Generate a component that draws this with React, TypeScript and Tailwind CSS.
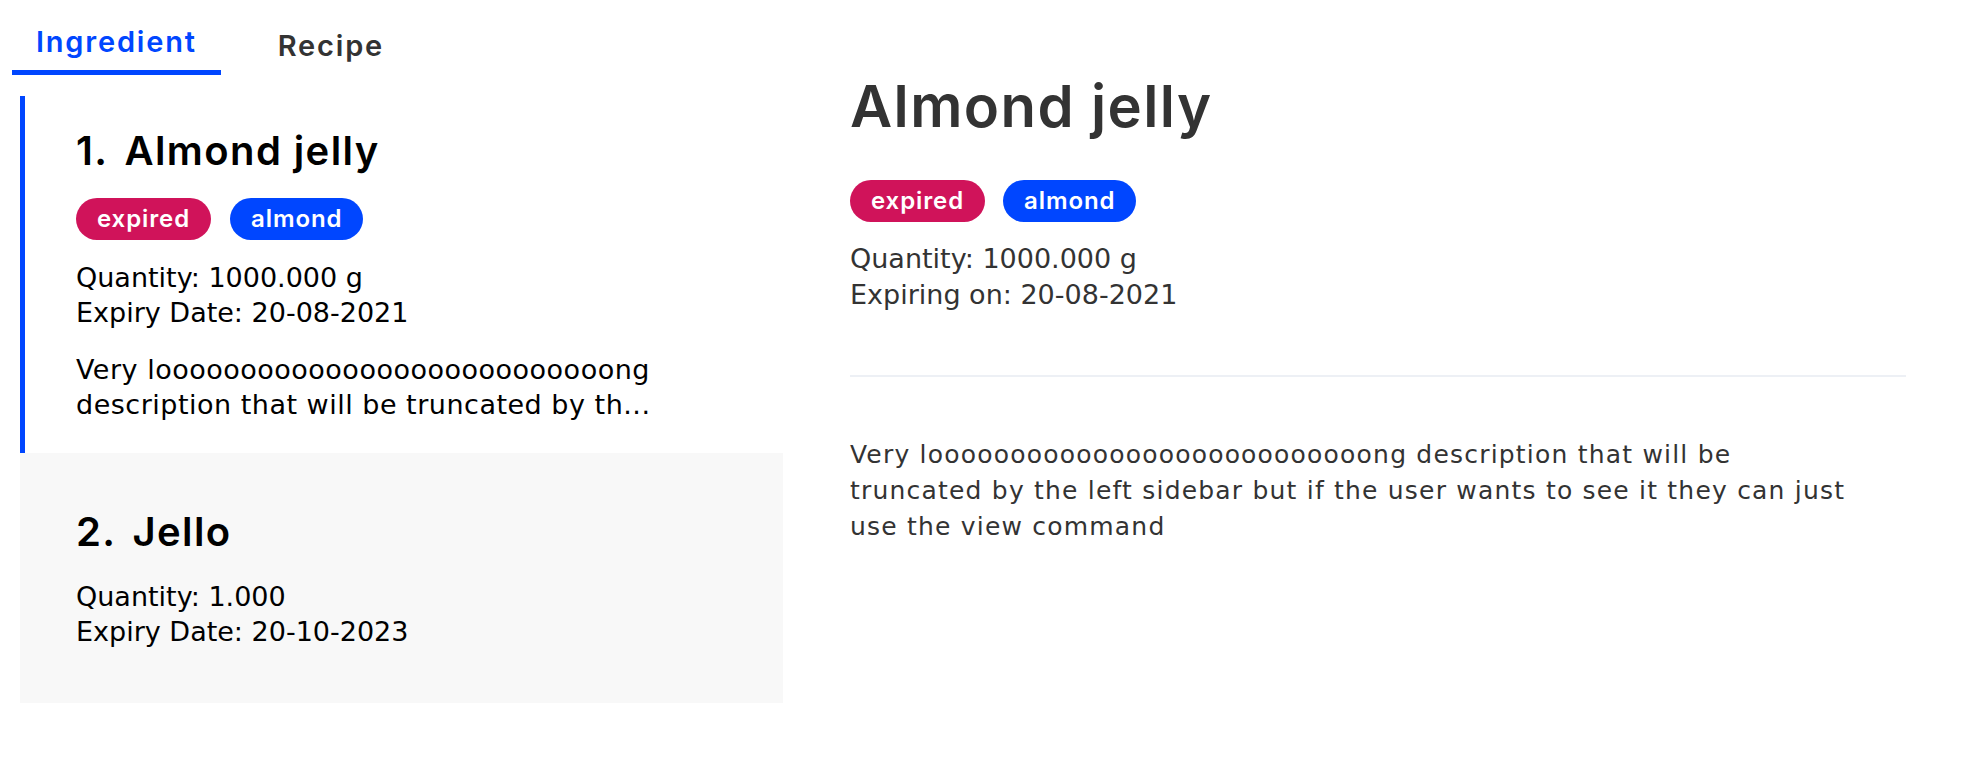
import React, { useState } from "react"

type Ingredient = {
  name: string
  quantity: string
  expiry: string
  tags: { label: string; tone: "red" | "blue" }[]
  description?: string
}

const longWord = "l" + "o".repeat(27) + "ng"

const ingredients: Ingredient[] = [
  {
    name: "Almond jelly",
    quantity: "1000.000 g",
    expiry: "20-08-2021",
    tags: [
      { label: "expired", tone: "red" },
      { label: "almond", tone: "blue" },
    ],
    description: `Very ${longWord} description that will be truncated by the left sidebar but if the user wants to see it they can just use the view command`,
  },
  {
    name: "Jello",
    quantity: "1.000",
    expiry: "20-10-2023",
    tags: [],
  },
]

function Tag({ label, tone }: { label: string; tone: "red" | "blue" }) {
  return (
    <span
      className={
        "inline-flex h-[42px] items-center rounded-full px-[21px] font-['Inter',sans-serif] text-[24px] font-semibold leading-none tracking-[0.9px] text-white " +
        (tone === "red" ? "bg-[#d0135a]" : "bg-[#0046ff]")
      }
    >
      {label}
    </span>
  )
}

function Tabs({ active, onChange }: { active: string; onChange: (t: string) => void }) {
  return (
    <div className="flex items-start gap-[33px]">
      {["Ingredient", "Recipe"].map((t) => {
        const on = t === active
        return (
          <button
            key={t}
            onClick={() => onChange(t)}
            className={
              "px-[24px] font-['Inter',sans-serif] text-[29px] leading-[36px] font-semibold tracking-[1.8px] border-b-[5px] " +
              (on
                ? "pt-[24px] pb-[10px] text-[#0046ff] border-[#0046ff]"
                : "pt-[28px] pb-[6px] text-[#333333] border-transparent")
            }
          >
            {t}
          </button>
        )
      })}
    </div>
  )
}

function ListCard({ item, index, selected }: { item: Ingredient; index: number; selected: boolean }) {
  return (
    <div
      className={
        "flex min-h-[250px] flex-col justify-center border-l-[5px] py-[31px] pl-[51px] pr-[40px] " +
        (selected ? "border-[#0046ff] bg-white" : "border-transparent bg-[#f8f8f8]")
      }
    >
      <h2 className="font-['Inter',sans-serif] text-[40px] font-semibold leading-[48px] tracking-[1.4px] text-black">
        <span className="mr-[16px]">{index}.</span>
        {item.name}
      </h2>
      {item.tags.length > 0 && (
        <div className="mt-[23px] flex gap-[19px]">
          {item.tags.map((t) => (
            <Tag key={t.label} {...t} />
          ))}
        </div>
      )}
      <div className={"text-[27px] leading-[35px] text-black " + (item.tags.length ? "mt-[20px]" : "mt-[23px]")}>
        <p>Quantity: {item.quantity}</p>
        <p>Expiry Date: {item.expiry}</p>
      </div>
      {item.description && (
        <p className="mt-[22px] text-[27px] leading-[35px] tracking-[0.5px] text-black">
          Very {longWord} description that will be truncated by th...
        </p>
      )}
    </div>
  )
}

export default function App() {
  const [tab, setTab] = useState("Ingredient")
  const current = ingredients[0]

  return (
    <div className="flex min-h-screen bg-white font-['DejaVu_Sans',sans-serif]">
      <div className="w-[783px] shrink-0 pl-[12px]">
        <Tabs active={tab} onChange={setTab} />
        <div className="ml-[8px] mt-[21px]">
          {ingredients.map((item, i) => (
            <ListCard key={item.name} item={item} index={i + 1} selected={i === 0} />
          ))}
        </div>
      </div>

      <div className="flex-1 pl-[67px] pr-[64px] pt-[71px]">
        <h1 className="font-['Inter',sans-serif] text-[58px] font-semibold leading-[70px] tracking-[1.4px] text-[#333333]">
          {current.name}
        </h1>
        <div className="mt-[39px] flex gap-[18px]">
          {current.tags.map((t) => (
            <Tag key={t.label} {...t} />
          ))}
        </div>
        <div className="mt-[19px] text-[27px] leading-[36px] text-[#333333]">
          <p>Quantity: {current.quantity}</p>
          <p>Expiring on: {current.expiry}</p>
        </div>
        <hr className="mt-[62px] border-0 border-t-2 border-[#edf0f5]" />
        <p className="mt-[60px] max-w-[1015px] text-[25px] leading-[36px] tracking-[1.2px] text-[#333333]">
          {current.description}
        </p>
      </div>
    </div>
  )
}
